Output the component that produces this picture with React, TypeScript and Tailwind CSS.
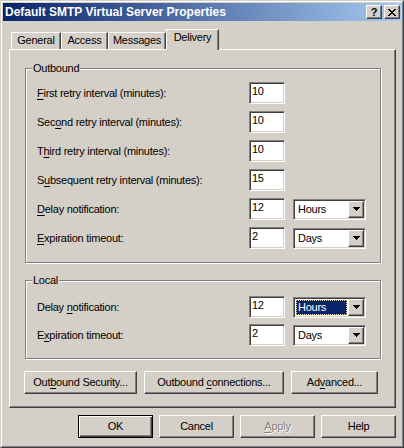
import React from "react";

const RAISED =
  "border border-t-white border-l-white border-r-[#404040] border-b-[#404040] shadow-[inset_-1px_-1px_0_#808080] bg-[#d4d0c8]";
const SUNKEN =
  "border border-t-[#808080] border-l-[#808080] border-r-white border-b-white shadow-[inset_1px_1px_0_#404040,inset_-1px_-1px_0_#d4d0c8]";

function U({ c }: { c: string }) {
  return <span className="underline decoration-1 underline-offset-[2px]">{c}</span>;
}

function TextBox({ value }: { value: string }) {
  return (
    <div className={`${SUNKEN} bg-white w-[36px] h-[22px] pl-[2px] pt-[2px] shrink-0`}>
      {value}
    </div>
  );
}

function Arrow() {
  return (
    <svg width="7" height="4" viewBox="0 0 7 4" shapeRendering="crispEdges">
      <rect x="0" y="0" width="7" height="1" fill="#000" />
      <rect x="1" y="1" width="5" height="1" fill="#000" />
      <rect x="2" y="2" width="3" height="1" fill="#000" />
      <rect x="3" y="3" width="1" height="1" fill="#000" />
    </svg>
  );
}

function CloseGlyph() {
  const rows = [
    [0, 1, 6, 7],
    [1, 2, 5, 6],
    [2, 3, 4, 5],
    [3, 4],
    [2, 3, 4, 5],
    [1, 2, 5, 6],
    [0, 1, 6, 7],
  ];
  return (
    <svg width="8" height="7" viewBox="0 0 8 7" shapeRendering="crispEdges">
      {rows.map((r, y) =>
        r.map((x) => <rect key={`${x}-${y}`} x={x} y={y} width="1" height="1" fill="#000" />)
      )}
    </svg>
  );
}

function Combo({ value, focused }: { value: string; focused?: boolean }) {
  return (
    <div className={`${SUNKEN} bg-white w-[73px] h-[21px] p-[1px] flex shrink-0`}>
      <div className="flex-1 flex">
        {focused ? (
          <div className="m-[1px] flex-1 bg-[#0a246a] text-white border border-dotted border-[#f5db95] pl-[1px] flex items-center">
            {value}
          </div>
        ) : (
          <div className="pl-[3px] flex items-center">{value}</div>
        )}
      </div>
      <div className={`${RAISED} w-[16px] h-[17px] flex items-center justify-center`}>
        <Arrow />
      </div>
    </div>
  );
}

function Row({
  label,
  value,
  unit,
  focused,
}: {
  label: React.ReactNode;
  value: string;
  unit?: string;
  focused?: boolean;
}) {
  return (
    <div className="flex items-center h-[22px]">
      <div className="w-[212px] shrink-0 whitespace-nowrap">{label}</div>
      <TextBox value={value} />
      {unit && (
        <div className="ml-[8px]">
          <Combo value={unit} focused={focused} />
        </div>
      )}
    </div>
  );
}

function Group({
  title,
  className,
  children,
}: {
  title: string;
  className: string;
  children: React.ReactNode;
}) {
  return (
    <div
      className={`relative w-[356px] border border-[#808080] shadow-[inset_1px_1px_0_#fff,1px_1px_0_#fff] pl-[11px] flex flex-col ${className}`}
    >
      <span className="absolute -top-[7px] left-[6px] px-[1px] bg-[#d4d0c8] leading-[13px]">{title}</span>
      {children}
    </div>
  );
}

function Btn({
  w,
  children,
  def,
  disabled,
}: {
  w: string;
  children: React.ReactNode;
  def?: boolean;
  disabled?: boolean;
}) {
  const base = def
    ? "border border-black shadow-[inset_1px_1px_0_#fff,inset_-1px_-1px_0_#404040,inset_-2px_-2px_0_#808080] bg-[#d4d0c8]"
    : RAISED;
  return (
    <div
      className={`${base} ${w} h-[23px] flex items-center justify-center shrink-0 whitespace-nowrap ${
        disabled ? "text-[#808080] [text-shadow:1px_1px_0_#fff]" : ""
      }`}
    >
      <span>{children}</span>
    </div>
  );
}

function Tab({ label, w, selected }: { label: string; w: string; selected?: boolean }) {
  return (
    <div
      className={`${w} ${
        selected ? "relative z-10 h-[21px] -mb-[1px] pt-[1px]" : "h-[17px] pt-[1px]"
      } bg-[#d4d0c8] border-t border-l border-r border-t-white border-l-white border-r-[#404040] shadow-[inset_-1px_0_0_#808080] flex justify-center shrink-0`}
    >
      {label}
    </div>
  );
}

export default function App() {
  return (
    <div className="w-[404px] h-[448px] bg-[#d4d0c8] border border-t-[#d4d0c8] border-l-[#d4d0c8] border-r-[#404040] border-b-[#404040] font-['Liberation_Sans',Arial,sans-serif] text-[11px] leading-[13px] tracking-[-0.25px] text-black select-none">
      <div className="h-full border border-t-white border-l-white border-r-[#808080] border-b-[#808080] p-[1px] flex flex-col">
        {/* Title bar */}
        <div className="h-[18px] shrink-0 flex items-center justify-between bg-[linear-gradient(to_right,#0a246a,#a6caf0)] pl-[2px] pr-[1px]">
          <span className="text-white font-bold text-[12px] tracking-[0px]">
            Default SMTP Virtual Server Properties
          </span>
          <div className="flex gap-[2px]">
            <div className={`${RAISED} w-[16px] h-[14px] flex items-center justify-center font-bold text-[11px] leading-[11px] tracking-[0px]`}>
              ?
            </div>
            <div className={`${RAISED} w-[16px] h-[14px] flex items-center justify-center`}>
              <CloseGlyph />
            </div>
          </div>
        </div>

        {/* Content */}
        <div className="flex-1 flex flex-col pl-[6px] pr-[5px] pt-[8px]">
          <div className="h-[20px] flex items-end pl-[2px] shrink-0">
            <Tab label="General" w="w-[50px]" />
            <Tab label="Access" w="w-[47px]" />
            <Tab label="Messages" w="w-[58px]" />
            <Tab label="Delivery" w="w-[53px]" selected />
          </div>

          <div className="h-[359px] shrink-0 border border-t-white border-l-white border-r-[#404040] border-b-[#404040] shadow-[inset_-1px_-1px_0_#808080] pt-[18px] pl-[15px] flex flex-col">
            <Group title="Outbound" className="h-[195px] pt-[13px] gap-[7px]">
              <Row label={<><U c="F" />irst retry interval (minutes):</>} value="10" />
              <Row label={<>Sec<U c="o" />nd retry interval (minutes):</>} value="10" />
              <Row label={<>T<U c="h" />ird retry interval (minutes):</>} value="10" />
              <Row label={<>S<U c="u" />bsequent retry interval (minutes):</>} value="15" />
              <Row label={<><U c="D" />elay notification:</>} value="12" unit="Hours" />
              <Row label={<><U c="E" />xpiration timeout:</>} value="2" unit="Days" />
            </Group>

            <Group title="Local" className="mt-[17px] h-[79px] pt-[15px] gap-[6px]">
              <Row label={<>Delay <U c="n" />otification:</>} value="12" unit="Hours" focused />
              <Row label={<>E<U c="x" />piration timeout:</>} value="2" unit="Days" />
            </Group>

            <div className="mt-[12px] -ml-[1px] flex gap-[7px]">
              <Btn w="w-[113px]">Out<U c="b" />ound Security...</Btn>
              <Btn w="w-[140px]">Outbound <U c="c" />onnections...</Btn>
              <Btn w="w-[87px]">Ad<U c="v" />anced...</Btn>
            </div>
          </div>

          <div className="mt-[7px] flex justify-end gap-[6px]">
            <Btn w="w-[75px]" def>OK</Btn>
            <Btn w="w-[75px]">Cancel</Btn>
            <Btn w="w-[75px]" disabled><U c="A" />pply</Btn>
            <Btn w="w-[75px]">Help</Btn>
          </div>
        </div>
      </div>
    </div>
  );
}
